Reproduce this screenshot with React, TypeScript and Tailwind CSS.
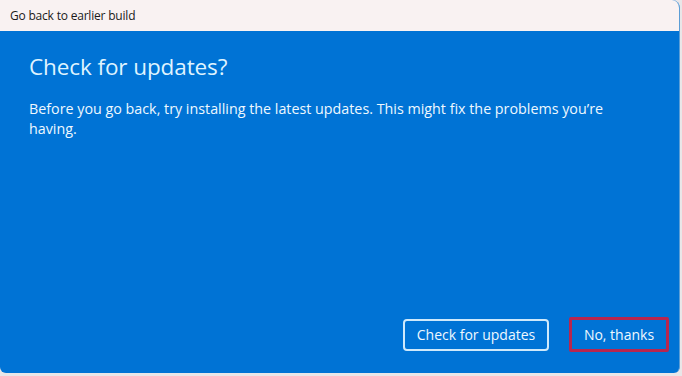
export default function App() {
  const font = { fontFamily: '"Segoe UI", "Open Sans", "Noto Sans", sans-serif' };
  return (
    <div className="w-[682px] h-[376px] bg-[#e9e6e8] overflow-hidden" style={font}>
      <div className="w-[680px] h-[373px] rounded-b-[6px] rounded-tr-[8px] overflow-hidden flex flex-col bg-[#0073d5] border-r border-[#5c9ed6]">
        <div className="h-[31px] bg-[#f9f2f2] flex items-center pl-[10px] text-[12px] tracking-[-0.2px] text-[#1a1a1a] shrink-0">
          Go back to earlier build
        </div>
        <div className="flex-1 flex flex-col pl-[29px] pr-[10px] pt-[20px] pb-[21px]">
          <div className="text-[22.5px] leading-[32px] text-[#dff3ff] tracking-[-0.1px]">Check for updates?</div>
          <div className="mt-[16px] text-[14.3px] leading-[20px] text-[#eef8ff] w-[610px]">
            Before you go back, try installing the latest updates. This might fix the problems you’re having.
          </div>
          <div className="flex-1" />
          <div className="flex justify-end items-center gap-[20px]">
            <div className="h-[32px] w-[146px] border-2 border-[#cfe9fb] rounded-[4px] flex items-center justify-center text-[14px] text-[#eef8ff]">
              Check for updates
            </div>
            <div className="h-[35px] w-[100px] border-[3px] border-[#b8264f] rounded-[2px] flex items-center justify-center text-[14px] text-[#eef8ff]">
              No, thanks
            </div>
          </div>
        </div>
      </div>
    </div>
  );
}
